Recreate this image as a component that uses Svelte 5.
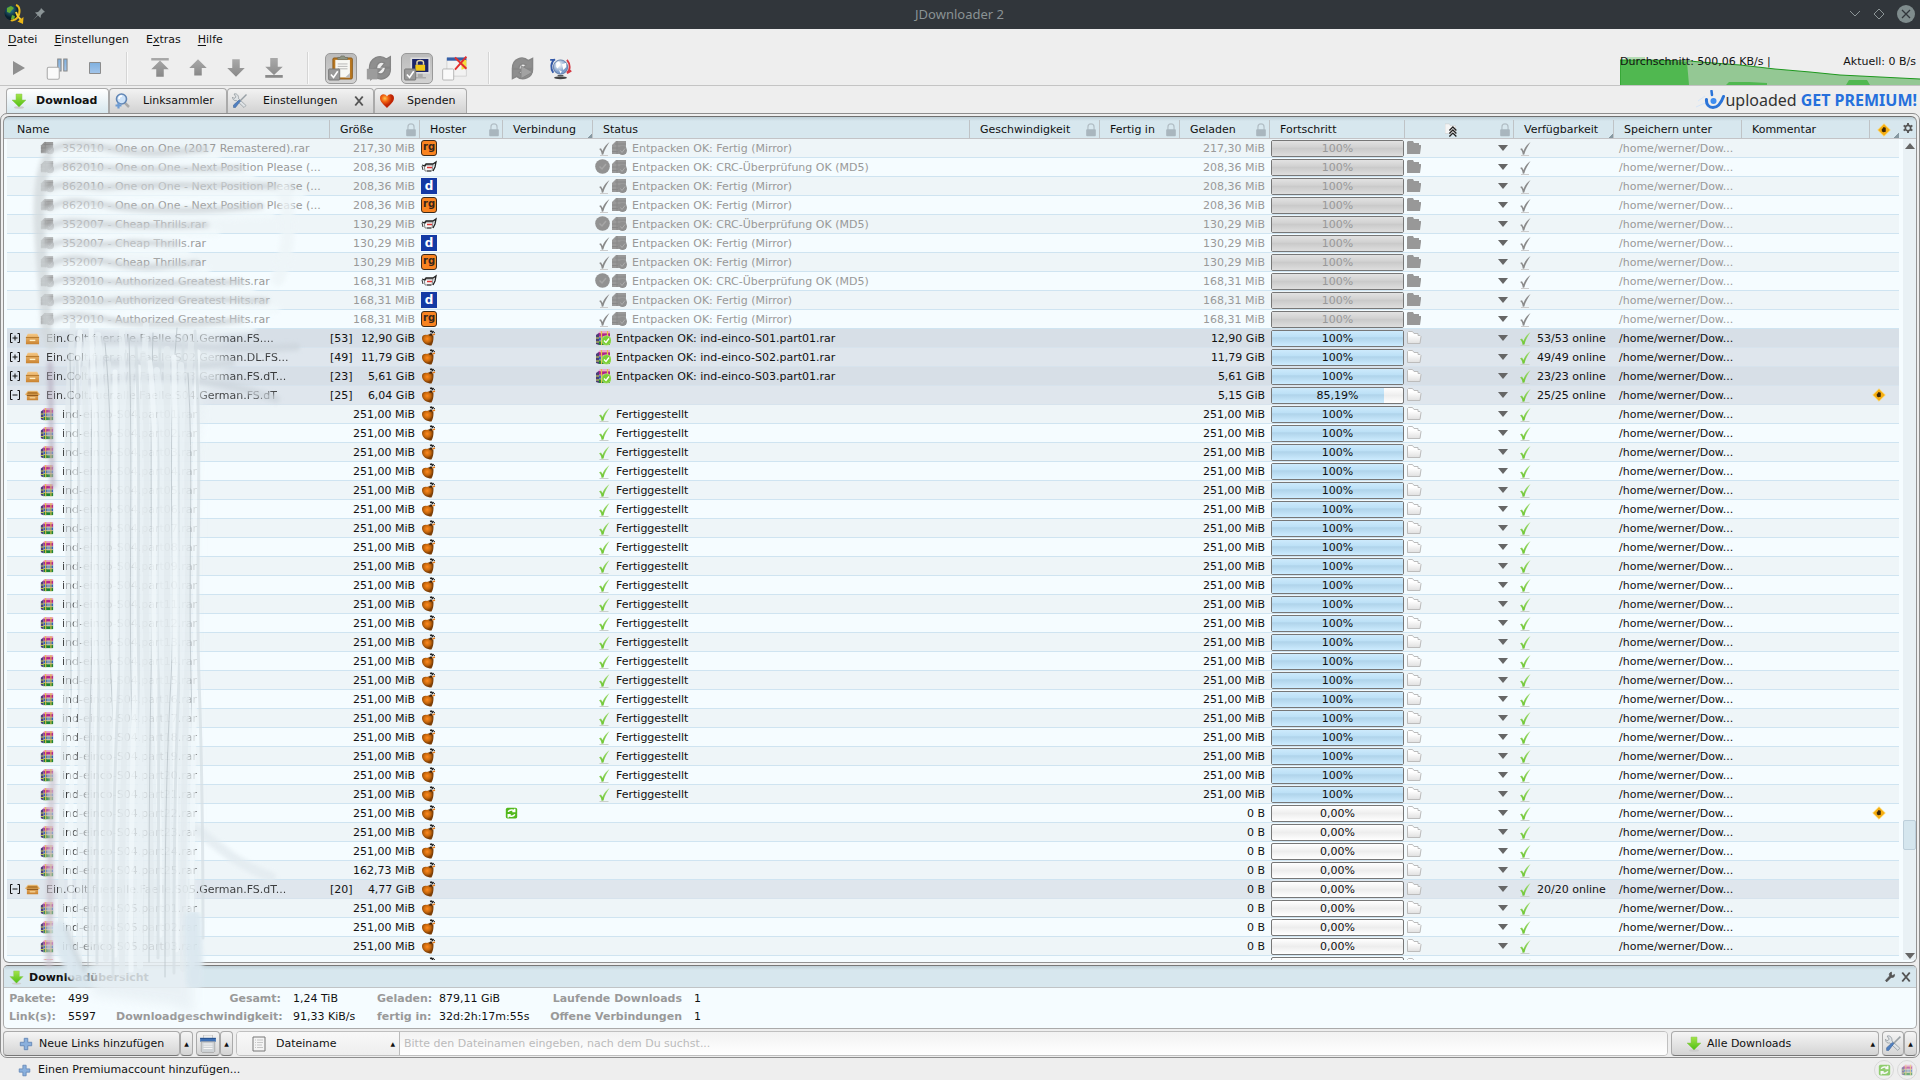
<script>
  const mirror = 'Entpacken OK: Fertig (Mirror)';
  const crc = 'Entpacken OK: CRC-Überprüfung OK (MD5)';
  const path = '/home/werner/Dow...';

  const old = [
    ['352010 - One on One (2017 Remastered).rar', '217,30', 'rg'],
    ['862010 - One on One - Next Position Please (...', '208,36', 'bull'],
    ['862010 - One on One - Next Position Please (...', '208,36', 'd'],
    ['862010 - One on One - Next Position Please (...', '208,36', 'rg'],
    ['352007 - Cheap Thrills.rar', '130,29', 'bull'],
    ['352007 - Cheap Thrills.rar', '130,29', 'd'],
    ['352007 - Cheap Thrills.rar', '130,29', 'rg'],
    ['332010 - Authorized Greatest Hits.rar', '168,31', 'bull'],
    ['332010 - Authorized Greatest Hits.rar', '168,31', 'd'],
    ['332010 - Authorized Greatest Hits.rar', '168,31', 'rg']
  ].map(([name, size, host]) => ({
    name,
    size: size + ' MiB',
    loaded: size + ' MiB',
    host,
    off: true,
    pct: 100,
    label: '100%',
    status: host === 'bull' ? crc : mirror,
    icons: [host === 'bull' ? 'crc' : 'check-off', 'extract-off']
  }));

  function pack(name, count, size, loaded, pct, label, extra = {}) {
    return { pack: true, name, count, size, loaded, pct, label, host: 'ul', icons: [], ...extra };
  }

  function link(name, size, done, extra = {}) {
    return {
      name,
      size,
      loaded: done ? size : '0 B',
      pct: done ? 100 : 0,
      label: done ? '100%' : '0,00%',
      status: done ? 'Fertiggestellt' : '',
      icons: done ? ['check'] : [],
      host: 'ul',
      ...extra
    };
  }

  const num = (n) => String(n).padStart(2, '0');
  const s04 = Array.from({ length: 25 }, (_, i) =>
    link(`ind-einco-S04.part${num(i + 1)}.rar`, i === 24 ? '162,73 MiB' : '251,00 MiB', i < 21,
      i === 21 ? { busy: true, warn: true } : {})
  );
  const s05 = Array.from({ length: 4 }, (_, i) => link(`ind-einco-S05.part${num(i + 1)}.rar`, '251,00 MiB', false));

  const rows = [
    ...old,
    pack('Ein.Colt.fuer.alle.Faelle.S01.German.FS....', 53, '12,90 GiB', '12,90 GiB', 100, '100%', { icons: ['extract'], status: 'Entpacken OK: ind-einco-S01.part01.rar' }),
    pack('Ein.Colt.fuer.alle.Faelle.S02.German.DL.FS...', 49, '11,79 GiB', '11,79 GiB', 100, '100%', { icons: ['extract'], status: 'Entpacken OK: ind-einco-S02.part01.rar' }),
    pack('Ein.Colt.fuer.alle.Faelle.S03.German.FS.dT...', 23, '5,61 GiB', '5,61 GiB', 100, '100%', { icons: ['extract'], status: 'Entpacken OK: ind-einco-S03.part01.rar' }),
    pack('Ein.Colt.fuer.alle.Faelle.S04.German.FS.dT', 25, '6,04 GiB', '5,15 GiB', 85.19, '85,19%', { open: true, warn: true }),
    ...s04,
    pack('Ein.Colt.fuer.alle.Faelle.S05.German.FS.dT...', 20, '4,77 GiB', '0 B', 0, '0,00%', { open: true }),
    ...s05
  ];

  const columns = [
    { key: 'name', label: 'Name' },
    { key: 'size', label: 'Größe', lock: true },
    { key: 'host', label: 'Hoster', lock: true },
    { key: 'conn', label: 'Verbindung', sort: true },
    { key: 'status', label: 'Status' },
    { key: 'speed', label: 'Geschwindigkeit', lock: true },
    { key: 'eta', label: 'Fertig in', lock: true },
    { key: 'loaded', label: 'Geladen', lock: true },
    { key: 'progress', label: 'Fortschritt' },
    { key: 'prio', icon: 'prio', lock: true },
    { key: 'avail', label: 'Verfügbarkeit', sort: true },
    { key: 'path', label: 'Speichern unter' },
    { key: 'comment', label: 'Kommentar' },
    { key: 'warn', icon: 'warn', sort: true }
  ];

  // wavy strands lying over the file names, one grey and one pale per row
  const ends = [215, 250, 300, 270, 215, 185, 205, 250, 275, 250];
  const across = ends.flatMap((end, i) => {
    const y = 9 + i * 19;
    const k = (i % 3) * 4 - 4;
    return [
      { d: `M46 ${y + 9} C90 ${y + 4 + k} 150 ${y + 13 - k} ${end} ${y + 9}`, c: '#f2f9fc', w: 9 },
      { d: `M48 ${y + 3} C66 ${y - 7} 84 ${y + k} 110 ${y + 1} S${end - 60} ${y + 3 - k} ${end - 10} ${y + 1}`, c: '#ccd2d6', w: 6 }
    ];
  });
  const down = Array.from({ length: 34 }, (_, i) => {
    const x = 66 + i * 4;
    const bend = ((i * 7) % 13) - 6;
    const top = 185 + ((i * 29) % 50);
    const end = 790 + ((i * 23) % 50);
    return {
      d: `M${x - bend} ${top} C${x + bend} 330 ${x - bend} 430 ${x} 540 S${x + bend} 740 ${x + bend} ${end}`,
      c: ['#e3ebef', '#b4bec4', '#f2f9fc', '#d6dfe4', '#eaf2f6'][i % 5],
      w: [6, 1, 5, 3, 6][i % 5]
    };
  });
</script>

{#snippet icon(name, w = 16, h = w)}
  <svg class="icon" width={w} height={h} viewBox="0 0 16 16" aria-hidden="true"><use href={'#' + name} /></svg>
{/snippet}

<svg class="sprite" aria-hidden="true">
  <defs>
    <linearGradient id="g-green" x2="0" y2="1"><stop stop-color="#a4e34a" /><stop offset="1" stop-color="#4fbf14" /></linearGradient>
    <linearGradient id="g-check" x2="0" y2="1"><stop stop-color="#a5dd7d" /><stop offset="1" stop-color="#6cc52e" /></linearGradient>
    <linearGradient id="g-grey" x2="0" y2="1"><stop stop-color="#a9a9a9" /><stop offset="1" stop-color="#888" /></linearGradient>
    <linearGradient id="g-blue" x2="0" y2="1"><stop stop-color="#7fb0df" /><stop offset="1" stop-color="#a3c5ea" /></linearGradient>
    <linearGradient id="g-box" x2="0" y2="1"><stop stop-color="#f5c885" /><stop offset="1" stop-color="#c9822f" /></linearGradient>
    <linearGradient id="g-folder" x2="0" y2="1"><stop offset=".3" stop-color="#fff" /><stop offset="1" stop-color="#e0e0e0" /></linearGradient>
    <radialGradient id="g-heart" cx=".35" cy=".3"><stop stop-color="#ffc34d" /><stop offset=".5" stop-color="#f0600f" /><stop offset="1" stop-color="#c02505" /></radialGradient>
    <radialGradient id="g-nut" cx=".45" cy=".4"><stop stop-color="#ff8a1e" /><stop offset=".6" stop-color="#c8680c" /><stop offset="1" stop-color="#7c3e06" /></radialGradient>
    <radialGradient id="g-globe" cx=".4" cy=".35"><stop stop-color="#fff" /><stop offset="1" stop-color="#7b9bc8" /></radialGradient>
    <radialGradient id="g-earth" cx=".4" cy=".3"><stop stop-color="#2c7f96" /><stop offset="1" stop-color="#0a1f2c" /></radialGradient>
  </defs>
  <symbol id="check" viewBox="0 0 16 16"><path d="M4 9.500l2-1 1.500 2.500C9 7 11 4.500 14.500 2 12 6 9.500 9.500 8.500 14.500l-2 .2C6.500 12.500 5.500 10.500 4 9.500z" fill="url(#g-check)" /><path d="M4.500 15.500h9" stroke="#c9cfca" /></symbol>
  <symbol id="check-off" viewBox="0 0 16 16"><path d="M4 9l2-.8 1.500 2.800C9 7 11 4.500 14.500 2 12 6 9.500 9.500 8.300 14.500l-1.500.2C6.500 12 5.500 9.500 4 9z" fill="#8b8b8b" /><path d="M5 15.500h8" stroke="#ccc" /></symbol>
  <symbol id="crc" viewBox="0 0 16 16"><circle cx="7.500" cy="7.500" r="7.300" fill="#929292" /><path d="M4.500 7.500l2.500 2.500 4-5" fill="none" stroke="#a6a6a6" stroke-width="1.500" /></symbol>
  <symbol id="rar" viewBox="0 0 16 16">
    <path d="M1 5l4-4h10v3H4L1 8z" fill="#e9a2d6" /><path d="M4 3h11v4H4z" fill="#b0218f" /><path d="M4 7h11v4H4z" fill="#2d62bd" /><path d="M4 11h11v4H4z" fill="#1d8335" />
    <path d="M1 5l3-2v12l-3-1z" fill="#4a3f78" /><path d="M1 8h3M1 12h3" stroke="#d6e24a" /><path d="M5 3h10M4 7h11M4 11h11" stroke="#f0c9a0" stroke-width=".7" /><path d="M6.500 1v14M12.500 1v14" stroke="#e6c247" stroke-width="1.200" />
    <path d="M8 6h3.500v6H8z" fill="#d9d2b8" opacity=".5" />
  </symbol>
  <symbol id="extract" viewBox="0 0 16 16"><use href="#rar" /><circle cx="11.500" cy="10.500" r="4.800" fill="#7ccf35" stroke="#c9efa0" stroke-width=".6" /><path d="M9 10.500l2 2 3-4" fill="none" stroke="#fff" stroke-width="1.300" /></symbol>
  <symbol id="extract-off" viewBox="0 0 16 16"><path d="M1 5l4-4h10v13H1z" fill="#999" /><path d="M4 4h11M1 8h9M1 11.500h6M6 1v13" stroke="#888" /><circle cx="11.500" cy="10.500" r="4.500" fill="#909090" /><path d="M9.500 10.500l1.500 2 3-4" fill="none" stroke="#adadad" /></symbol>
  <symbol id="folder" viewBox="0 0 16 16"><path d="M1.500 13.500v-11l1-1h4l1.500 2h4v2h2l1 1-1 7z" fill="url(#g-folder)" stroke="#bcbcbc" /></symbol>
  <symbol id="folder-off" viewBox="0 0 16 16"><path d="M1 14V2l1-1h5l1 2h5v2h2v2l-1 7z" fill="#989898" /></symbol>
  <symbol id="box" viewBox="0 0 16 16"><path d="M3 3h10l2 4v7H1V7z" fill="url(#g-box)" /><path d="M1 7h14" stroke="#b27428" /><path d="M5 10h6" stroke="#fff0c4" stroke-width="1.500" /></symbol>
  <symbol id="box-open" viewBox="0 0 16 16"><path d="M3 3h10l3 4-2 1v5H2V8L0 7z" fill="url(#g-box)" /><path d="M3 4h10l1 3H2z" fill="#b87c2f" /><path d="M2 8h12" stroke="#8f571c" /><path d="M5 10.500h6" stroke="#ffe9b5" /></symbol>
  <symbol id="plus-fold" viewBox="0 0 10 10"><path d="M2.500.5h-2v9h2M7.500.5h2v9h-2M2.500 5h5M5 2.500v5" fill="none" stroke="#111" /></symbol>
  <symbol id="minus-fold" viewBox="0 0 10 10"><path d="M2.500.5h-2v9h2M7.500.5h2v9h-2M2.500 5h5" fill="none" stroke="#111" /></symbol>
  <symbol id="bull" viewBox="0 0 16 16"><path d="M3 6h9l-1 6H4z" fill="#f7f7f7" stroke="#555" stroke-width=".7" /><path d="M1 6l3 1 1-2h7l3-2-1 5-2 4" fill="none" stroke="#222" stroke-width="1.300" /><path d="M1 7l1 4M6 12h4" stroke="#333" /><path d="M6 8.500h5" stroke="#d33" stroke-width="1.500" /></symbol>
  <symbol id="ul" viewBox="0 0 16 16"><path d="M1 8c0-3 3-3.500 5-3 2-1.500 6-.5 6.500 1.500 0 4-.5 6-2 9C6 15.500 1 13 1 8z" fill="url(#g-nut)" /><path d="M8 5.500l1-2 2 0 .5 2z" fill="#3a2512" /><path d="M9 1.500l2-.5M11 3l1.500-2" stroke="#1d1d1d" stroke-width="1.600" /><path d="M11.500 5l2.500-1" stroke="#e57b1b" stroke-width="1.500" /><path d="M13 2.500h1" stroke="#444" /></symbol>
  <symbol id="busy" viewBox="0 0 16 16"><rect x="1" y="1" width="14" height="13" rx="2" fill="#52b81c" /><path d="M4 6c1-3 6-3 8-1M12 2v3.500H9M12 9c-1 3-6 3-8 1M4 13V9.500h3" fill="none" stroke="#fff" stroke-width="1.800" /></symbol>
  <symbol id="warn" viewBox="0 0 16 16"><path d="M8 .8l7.200 7.200L8 15.200.8 8z" fill="#f6ae12" stroke="#ffdf75" stroke-width=".8" /><path d="M5.500 7.500l2-3 2.500 1v4.500l-3 .5-1.500-1z" fill="#3d2706" /></symbol>
  <symbol id="prio" viewBox="0 0 16 16"><path d="M0 1h5l1 2h6v9H0z" fill="#f5f5f5" stroke="#ccc" stroke-width=".6" /><path d="M5 8.500l4-4 4 4M5 12l4-4 4 4M5 15.500l4-4 4 4" fill="none" stroke="#222" stroke-width="1.500" /></symbol>
  <symbol id="lock" viewBox="0 0 16 16"><path d="M4.500 8V4.500a3.500 3.500 0 0 1 7 0V8" fill="none" stroke="#b3bfc6" stroke-width="1.400" /><rect x="2.500" y="7" width="11" height="8" rx="1" fill="#a9b6be" /></symbol>
  <symbol id="gear" viewBox="0 0 16 16"><path d="M8 0v16M1 4l14 8M15 4L1 12" stroke="#555" stroke-width="3" /><circle cx="8" cy="8" r="4.300" fill="#d7e7ee" stroke="#555" stroke-width="2.600" /></symbol>
  <symbol id="down" viewBox="0 0 16 16"><ellipse cx="8" cy="14.500" rx="5" ry="1.200" fill="#ccc" /><path d="M5 1h6v6h4l-7 7-7-7h4z" fill="url(#g-green)" stroke="#8cc95c" stroke-width=".5" /></symbol>
  <symbol id="plus" viewBox="0 0 16 16"><path d="M6 1.500h4V6h4.500v4H10v4.500H6V10H1.500V6H6z" fill="#8ab0dd" stroke="#6185b5" /></symbol>
  <symbol id="tools" viewBox="0 0 16 16"><path d="M2 1l2 3-2 1.500L.5 4c0 3 2 4 4 3.500l7.500 7 2-2-7.500-7C7 3 5 0 2 1z" fill="#dfe3e6" stroke="#8b9398" stroke-width=".7" /><path d="M14.500 1.500L8 8" stroke="#98a0a5" stroke-width="1.500" /><path d="M8.500 8L3.500 14.500l-2 0v-2.500L7 7z" fill="#4f7fc0" stroke="#365c91" stroke-width=".5" /></symbol>
  <symbol id="search" viewBox="0 0 16 16"><path d="M10 9l5 5" stroke="#aaa" stroke-width="2.500" /><circle cx="7.500" cy="6" r="5" fill="#cfe3f8" stroke="#6186b5" stroke-width="1.600" /><path d="M5 6c0-2 1-3 3-3" stroke="#fff" fill="none" stroke-width="1.500" /><path d="M4.500 9.500v6M1.500 12.500h6" stroke="#6d9bd2" stroke-width="2.200" /></symbol>
  <symbol id="heart" viewBox="0 0 16 16"><path d="M8 15C4 11 1 8.500 1 5c0-4 5-5 7-1.500C10 0 15 1 15 5c0 3.500-3 6-7 10z" fill="url(#g-heart)" /></symbol>
  <symbol id="cross" viewBox="0 0 16 16"><path d="M3 2l10 12M13 2L3 14" stroke="#555" stroke-width="2.600" /></symbol>
  <symbol id="wrench" viewBox="0 0 16 16"><path d="M10 1.500c-3 .5-3.500 3-2.500 5L2 12.500l1.500 2L9.500 8.500c3 .7 5-1 4.500-4l-2.500 1.500-1.500-1.500z" fill="#555" stroke="#555" /></symbol>
  <symbol id="page" viewBox="0 0 16 16"><path d="M2 1h12v14H2z" fill="#f4f4f4" stroke="#777" /><path d="M6 4h6M6 6.500h6M6 9h5M6 11.500h6M4 4h1M4 6.500h1M4 9h1M4 11.500h1" stroke="#bbb" stroke-width=".8" /></symbol>
  <symbol id="container" viewBox="0 0 16 16"><path d="M4 0h8v4H4z" fill="#eee" stroke="#aaa" stroke-width=".5" /><path d="M1 3h14v3H1z" fill="#3e70b5" /><path d="M1 3h14" stroke="#24508f" /><path d="M2 6h12v8.500l-1 1H3l-1-1z" fill="#cfd3d6" stroke="#999" stroke-width=".6" /><path d="M4 8h8M4 10h8M4 12h8" stroke="#f6f6f6" /></symbol>
  <symbol id="play" viewBox="0 0 16 16"><path d="M2 1l12 7L2 15z" fill="#8f8f8f" /></symbol>
  <symbol id="pause" viewBox="0 0 16 16"><path d="M8.500 2h2.200v8H8.500zM12.500 2h2.200v8h-2.200z" fill="url(#g-blue)" stroke="#888" stroke-width=".7" /><rect x="1.500" y="7.500" width="8" height="8" rx="1" fill="#fafafa" stroke="#aaa" stroke-width=".7" /></symbol>
  <symbol id="stop" viewBox="0 0 16 16"><path d="M2.500 2.500h11v11h-11z" fill="url(#g-blue)" stroke="#8c8c8c" /></symbol>
  <symbol id="top" viewBox="0 0 16 16"><path d="M1 0h14v2H1zM8 2l7 7h-4v6H5V9H1z" fill="url(#g-grey)" /></symbol>
  <symbol id="up" viewBox="0 0 16 16"><path d="M8 1l7 7h-4v6H5V8H1z" fill="url(#g-grey)" /></symbol>
  <symbol id="lower" viewBox="0 0 16 16"><path d="M8 15l7-7h-4V1H5v7H1z" fill="url(#g-grey)" /></symbol>
  <symbol id="bottom" viewBox="0 0 16 16"><path d="M1 13.500h14v2.200H1zM8 13.500L1 7h4V0h6v7h4z" fill="url(#g-grey)" /></symbol>
  <symbol id="tick" viewBox="0 0 16 16"><rect x=".4" y="8.600" width="6.800" height="6.800" rx=".5" fill="#999" stroke="#777" stroke-width=".6" /><path d="M1.800 12l1.600 1.800L6 10" fill="none" stroke="#fff" stroke-width="1" /></symbol>
  <symbol id="clipboard" viewBox="0 0 16 16"><rect x="3" y="1.800" width="12" height="13" rx=".8" fill="#b97822" stroke="#835111" stroke-width=".5" /><path d="M4.500 3h9v10.800h-9z" fill="#f8f8f4" /><path d="M6 2.800V1.500h1.500L8 .6h2l.5.9H12v1.300z" fill="#8d9483" stroke="#6b7063" stroke-width=".4" /><path d="M6 5.500h6M6 7h6M6 8.500h6" stroke="#aaa" stroke-width=".5" /><path d="M13.500 11v2.800h-3z" fill="#bbb" /><use href="#tick" /></symbol>
  <symbol id="reconnect" viewBox="0 0 16 16"><path d="M2 9C2 1 9-.5 12.500 2.500L15 1v6.500H9.500L11.500 5C9 3.500 6.500 5 6.500 8zM15 8c.5 6.500-6 8.500-10 5L3 15V8.500h6.500l-2.500 2.500c2 1.500 4.500.5 5-3z" fill="#8f8f8f" stroke="#858585" stroke-width=".8" /><path d="M.5 8.500H7V15H.5z" fill="#9c9c9c" /></symbol>
  <symbol id="screen" viewBox="0 0 16 16"><path d="M4.500 2h11v9h-11z" fill="#1c2568" stroke="#ddd" stroke-width="1" /><path d="M8.500 11.500h3v2h2v1h-7v-1h2z" fill="#aaa" /><path d="M7 6h6v3.700H7z" fill="#f0c716" /><path d="M8 6V4.500c0-1.500 4-1.500 4 0V6" fill="none" stroke="#e9d9a9" stroke-width=".9" /><use href="#tick" /></symbol>
  <symbol id="silent" viewBox="0 0 16 16"><path d="M3 2h12v11H3z" fill="#f2f2f2" stroke="#ccc" stroke-width=".5" /><path d="M3 1.500h12v2H3z" fill="#3660a8" /><path d="M12 3h3v5l-3 1z" fill="#f4df3e" /><path d="M8 1.500l7 7M15 1L8 9" stroke="#e22f2f" stroke-width="1.200" /><rect x=".4" y="8.600" width="6.800" height="6.800" rx=".6" fill="#fafafa" stroke="#aaa" stroke-width=".5" /></symbol>
  <symbol id="update" viewBox="0 0 16 16"><path d="M1 8C1 1 8-1 12 2.500L15 1v7H8l2.500-2.500C8 4 5.500 5 5.500 8zM15 8.500c0 6-7 8.500-11 5L1 15V8.500h7L5.500 11c2 2 5 .5 5.500-2.500z" fill="#8e8e8e" stroke="#868686" /><path d="M7 6l8 4.500L7 15z" fill="#a2a2a2" stroke="#808080" stroke-width=".5" /></symbol>
  <symbol id="globe" viewBox="0 0 16 16"><ellipse cx="8" cy="14.500" rx="4.500" ry="1" fill="#444" /><path d="M6 13h4" stroke="#555" /><circle cx="8" cy="7" r="5" fill="url(#g-globe)" stroke="#4c6a99" stroke-width=".5" /><path d="M5 4l2-1 1 2-2 3-1-1zM9 5l3-1v3l-2 2zM7 9l2 1-1 1.500z" fill="#fff" /><path d="M3 11C1 8 1 4 4 1.500M.8 2h3.500" fill="none" stroke="#355aa8" stroke-width="1.300" /><path d="M12.500 2c2.500 3 2.500 7 0 9M15.500 9.500l-3 1.800" fill="none" stroke="#d43a44" stroke-width="1.300" /></symbol>
</svg>

<div class="window">
  <header class="titlebar">
    <svg width="20" height="20" viewBox="0 0 20 20" aria-hidden="true">
      <circle cx="8" cy="9" r="7.500" fill="url(#g-earth)" />
      <path d="M3 4l4-2 3 2-3 3-1 2-3-1zM8 11l3 1-1 4-3-1z" fill="#63a834" />
      <path d="M12 1c4 1 5 8 1 13-2 2-5 3-6 2" fill="none" stroke="#e9b91c" stroke-width="2" />
      <path d="M12 8c1 4 3 6 5 8" fill="none" stroke="#f5cf37" stroke-width="2" /><path d="M19.500 13l-.5 7-5.500-2.500z" fill="#eab516" />
    </svg>
    <svg width="14" height="14" viewBox="0 0 14 14" aria-hidden="true"><path d="M9 1l4 4-1.500.5L9 8l-.5 3L6 8.500 1 13l4.500-5L3 5.500 6 5l2.500-2.500z" fill="#8b9496" /></svg>
    <h1>JDownloader 2</h1>
    <div class="win-buttons">
      <button aria-label="Minimieren"><svg width="12" height="12" viewBox="0 0 12 12"><path d="M1 3l5 5 5-5" fill="none" stroke="#8b9496" /></svg></button>
      <button aria-label="Maximieren"><svg width="12" height="12" viewBox="0 0 12 12"><path d="M6 1l5 5-5 5-5-5z" fill="none" stroke="#8b9496" /></svg></button>
      <button aria-label="Schließen"><svg width="18" height="18" viewBox="0 0 18 18"><circle cx="9" cy="9" r="9" fill="#7f8c8d" /><path d="M5 5l8 8M13 5l-8 8" stroke="#31363b" stroke-width="1.300" /></svg></button>
    </div>
  </header>

  <nav class="menu">
    <button><u>D</u>atei</button>
    <button><u>E</u>instellungen</button>
    <button>E<u>x</u>tras</button>
    <button><u>H</u>ilfe</button>
  </nav>

  <div class="toolbar">
    <div class="tools">
      <button aria-label="Start">{@render icon('play')}</button>
      <button aria-label="Pause">{@render icon('pause', 24)}</button>
      <button aria-label="Stopp">{@render icon('stop')}</button>
    </div>
    <div class="tools">
      <button aria-label="Ganz nach oben">{@render icon('top', 20)}</button>
      <button aria-label="Nach oben">{@render icon('up', 20)}</button>
      <button aria-label="Nach unten">{@render icon('lower', 20)}</button>
      <button aria-label="Ganz nach unten">{@render icon('bottom', 20)}</button>
    </div>
    <div class="tools">
      <button class="on" aria-label="Zwischenablage">{@render icon('clipboard', 26)}</button>
      <button aria-label="Auto-Reconnect">{@render icon('reconnect', 26)}</button>
      <button class="on" aria-label="Premium">{@render icon('screen', 26)}</button>
      <button aria-label="Silent-Modus">{@render icon('silent', 26)}</button>
    </div>
    <div class="tools">
      <button aria-label="Reconnect">{@render icon('update', 23)}</button>
      <button aria-label="Update">{@render icon('globe', 23)}</button>
    </div>
    <div class="speed">
      <svg width="300" height="28" viewBox="0 0 300 28" aria-hidden="true">
        <path d="M0 3h30l50 2 40 3 35 4 35 3 30 3 80 4v6H0z" fill="#94c894" />
        <path d="M0 3h27l40 2 2 23H0zM106 28l3-3h20l18 1v2zM226 28l3-5h18l3 5z" fill="#50b850" />
        <path d="M0 28V3h27l43 1 10 1 40 3 35 4 35 3 30 3 80 4" fill="none" stroke="#1e981e" />
        <path d="M7 1h18" stroke="#7dcc7d" />
      </svg>
      <span>Durchschnitt: 500,06 KB/s |</span>
      <span>Aktuell: 0 B/s</span>
    </div>
  </div>

  <div class="tabrow">
    <div class="tabs">
      <button class="tab active">{@render icon('down')}<span>Download</span></button>
      <button class="tab linkgrabber">{@render icon('search')}<span>Linksammler</span></button>
      <button class="tab settings">{@render icon('tools')}<span>Einstellungen</span>{@render icon('cross', 12)}</button>
      <button class="tab donate">{@render icon('heart')}<span>Spenden</span></button>
    </div>
    <a class="banner" href="#premium">
      <svg width="30" height="20" viewBox="0 0 30 20" aria-hidden="true">
        <path d="M3 11l7-5M1 17l9-4" stroke="#d5e5f8" />
        <path d="M11.500 9.500c-.5 5 2.500 8 6.500 8s8-4 10.500-11" fill="none" stroke="#2b74d8" stroke-width="3" stroke-linecap="round" />
        <circle cx="18.500" cy="11" r="3" fill="#3e8df0" /><path d="M16.500 1l.5 4" stroke="#2b74d8" stroke-width="2.500" stroke-linecap="round" />
      </svg>
      <span class="brand">uploaded</span> <b>GET PREMIUM!</b>
    </a>
  </div>

  <main>
    <section class="panel">
      <div class="table-wrap">
        <table>
          <colgroup>
            {#each columns as c}<col class={'c-' + c.key} />{/each}
          </colgroup>
          <thead>
            <tr>
              {#each columns as c}
                <th class={'h-' + c.key} class:sort={c.sort} aria-label={c.label ?? c.key}>
                  <div class="head">
                    {#if c.label}<span>{c.label}</span>{:else}<span class="mid">{@render icon(c.icon, 14)}</span>{/if}
                    {#if c.lock}{@render icon('lock', 14)}{/if}
                  </div>
                </th>
              {/each}
            </tr>
          </thead>
          <tbody>
            {#each rows as r}
              <tr class:pack={r.pack} class:off={r.off}>
                <td>
                  <div class="cell" class:name-link={!r.pack}>
                    {#if r.pack}<button class="fold" aria-label={r.open ? 'Zuklappen' : 'Aufklappen'}>{@render icon(r.open ? 'minus-fold' : 'plus-fold', 10)}</button>{@render icon(r.open ? 'box-open' : 'box', 15)}{:else}{@render icon(r.off ? 'extract-off' : 'rar', 14)}{/if}
                    <span class="name">{r.name}</span>
                  </div>
                </td>
                <td class="num">{#if r.count}<span class="count">[{r.count}]</span>{/if}{r.size}</td>
                <td><div class="cell host">{#if r.host === 'rg' || r.host === 'd'}<b class={'badge ' + r.host}>{r.host}</b>{:else}{@render icon(r.host)}{/if}</div></td>
                <td><div class="cell">{#if r.busy}{@render icon('busy', 13)}{/if}</div></td>
                <td><div class="cell status">{#each r.icons as i}{@render icon(i)}{/each}<span>{r.status ?? ''}</span></div></td>
                <td></td>
                <td></td>
                <td class="num">{r.loaded}</td>
                <td><div class="bar"><div class="fill" style="width: {r.pct}%"></div><span>{r.label}</span></div></td>
                <td><div class="cell prio">{@render icon(r.off ? 'folder-off' : 'folder')}<i class="tri"></i></div></td>
                <td><div class="cell avail">{@render icon(r.off ? 'check-off' : 'check')}{#if r.pack}<span>{r.count}/{r.count} online</span>{/if}</div></td>
                <td class="path">{path}</td>
                <td></td>
                <td><div class="cell">{#if r.warn}{@render icon('warn', 14)}{/if}</div></td>
              </tr>
            {/each}
          </tbody>
        </table>
      </div>
      <div class="side">
        <button class="config" aria-label="Spalten">{@render icon('gear', 10)}</button>
        <div class="track"><i class="tri flip"></i><div class="thumb"></div><i class="tri"></i></div>
      </div>
    </section>

    <section class="overview">
      <header>
        {@render icon('down', 15)}
        <h2>Downloadübersicht</h2>
        <button aria-label="Konfigurieren">{@render icon('wrench', 12)}</button>
        <button aria-label="Schließen">{@render icon('cross', 12)}</button>
      </header>
      <dl>
        <dt>Pakete:</dt><dd>499</dd><dt>Gesamt:</dt><dd>1,24 TiB</dd><dt>Geladen:</dt><dd>879,11 GiB</dd><dt>Laufende Downloads</dt><dd>1</dd>
        <dt>Link(s):</dt><dd>5597</dd><dt>Downloadgeschwindigkeit:</dt><dd>91,33 KiB/s</dd><dt>fertig in:</dt><dd>32d:2h:17m:55s</dd><dt>Offene Verbindungen</dt><dd>1</dd>
      </dl>
    </section>

    <div class="actions">
      <div class="split">
        <button class="add">{@render icon('plus', 14)}<span>Neue Links hinzufügen</span></button>
        <button class="more" aria-label="Mehr">▲</button>
      </div>
      <div class="split">
        <button class="box-btn" aria-label="Container laden">{@render icon('container', 18)}</button>
        <button class="more" aria-label="Container-Menü">▲</button>
      </div>
      <div class="filter">
        <button class="kind">{@render icon('page', 16)}<span>Dateiname</span><i>▲</i></button>
        <input aria-label="Dateiname" placeholder="Bitte den Dateinamen eingeben, nach dem Du suchst..." />
      </div>
      <button class="view">{@render icon('down', 16)}<span>Alle Downloads</span><i>▲</i></button>
      <div class="split">
        <button class="cfg" aria-label="Einstellungen">{@render icon('tools', 17)}</button>
        <button class="more" aria-label="Einstellungsmenü">▲</button>
      </div>
    </div>

    <svg class="smear" width="360" height="880" viewBox="0 0 360 880" aria-hidden="true">
      <defs>
        <filter id="soft" x="-20%" width="140%"><feGaussianBlur stdDeviation="2" /></filter>
        <filter id="softer" x="-20%" width="140%"><feGaussianBlur stdDeviation="6" /></filter>
        <filter id="fine"><feGaussianBlur stdDeviation="0.600" /></filter>
      </defs>
      <path d="M78 196h140l6 40-24 20-6 60-2 560-20-10-80-10-10-60z" fill="#e8f0f4" opacity=".85" filter="url(#softer)" />
      <g fill="none" stroke-linecap="round" opacity=".78" filter="url(#soft)">
        {#each across as s}<path d={s.d} stroke={s.c} stroke-width={s.w} />{/each}
        <path d="M46 20C34 50 38 90 43 150S42 180 50 205" stroke="#d3d9dc" stroke-width="11" />
        <path d="M283 50c6 30 6 60-6 90" stroke="#eef5f8" stroke-width="14" />
        <path d="M76 204C130 196 190 214 295 208M80 226c40-8 80 6 150-2M90 243c60-10 120-5 185 17" stroke="#ced6dd" stroke-width="8" />
        <path d="M49 225c2 60 0 70 3 122" stroke="#b7aec0" stroke-width="5" />
        <path d="M52 635c-4 50-2 110-4 190" stroke="#cdc6d0" stroke-width="7" />
        <path d="M195 690c20 14 40 36 75 48" stroke="#e2eaef" stroke-width="10" />
      </g>
      <g fill="none" stroke-linecap="round" opacity=".7" filter="url(#fine)">
        {#each down as s}<path d={s.d} stroke={s.c} stroke-width={s.w} />{/each}
      </g>
      <g fill="none" stroke-linecap="round" opacity=".9" filter="url(#soft)">
        <path d="M58 790c6 24 14 40 22 50M192 780c0 30 2 44 2 62" stroke="#dae7ef" stroke-width="17" />
        <path d="M66 790c6 20 12 34 18 42" stroke="#c9d3d9" stroke-width="4" />
      </g>
    </svg>
  </main>

  <footer>
    <button>{@render icon('plus', 13)}<span>Einen Premiumaccount hinzufügen...</span></button>
    <div class="tray"><span>{@render icon('busy', 13)}</span><span>{@render icon('rar', 12)}</span></div>
  </footer>
</div>

<style>
  :global(body) {
    background: #eee;
  }

  .window {
    display: flex;
    flex-direction: column;
    height: 100vh;
    background: #eee;
    color: #111;
    font: 11px/14px "DejaVu Sans", Verdana, sans-serif;
    overflow: hidden;
  }

  .window * {
    box-sizing: border-box;
  }

  button {
    padding: 0;
    border: 0;
    background: none;
    font: inherit;
    color: inherit;
  }

  .sprite {
    position: absolute;
    width: 0;
    height: 0;
  }

  .icon {
    display: block;
    flex: none;
  }

  .titlebar {
    display: flex;
    align-items: center;
    gap: 8px;
    height: 29px;
    flex: none;
    padding: 0 5px 1px 4px;
    background: #31363b;
  }

  .titlebar h1 {
    flex: 1;
    margin: 0 0 0 24px;
    text-align: center;
    font: 13px "Noto Sans", sans-serif;
    color: #8a9294;
  }

  .win-buttons {
    display: flex;
    align-items: center;
    gap: 12px;
  }

  .win-buttons svg {
    display: block;
  }

  .menu {
    display: flex;
    gap: 17px;
    height: 22px;
    flex: none;
    padding-left: 8px;
  }

  u {
    text-underline-offset: 2px;
  }

  .toolbar {
    display: flex;
    height: 35px;
    flex: none;
    border-bottom: 1px solid #c4c4c4;
  }

  .tools {
    display: flex;
    align-items: center;
    gap: 6px;
    margin: 1px 0;
    padding-right: 17px;
  }

  .tools + .tools {
    padding-left: 17px;
    border-left: 1px solid #d5d5d5;
    box-shadow: inset 1px 0 #fafafa;
  }

  .tools:first-child {
    padding: 0 15px 0 3px;
  }

  .tools button {
    display: flex;
    align-items: center;
    justify-content: center;
    width: 32px;
    height: 31px;
    border: 1px solid transparent;
    border-radius: 5px;
  }

  .tools .on {
    background: linear-gradient(#bbb, #d2d2d2);
    border-color: #999;
  }

  .speed {
    display: flex;
    justify-content: space-between;
    position: relative;
    width: 300px;
    margin-left: auto;
    padding: 4px 4px 0 0;
  }

  .speed svg {
    position: absolute;
    left: 0;
    bottom: 0;
  }

  .speed span {
    position: relative;
  }

  .tabrow {
    display: flex;
    justify-content: space-between;
    height: 27px;
    flex: none;
  }

  .tabs {
    display: flex;
    align-items: flex-end;
    padding-left: 6px;
  }

  .tab {
    display: flex;
    align-items: center;
    height: 25px;
    padding-left: 4px;
    background: linear-gradient(#f2f2f2, #d2d2d2);
    border: 1px solid #aaa;
    border-bottom: 0;
    border-radius: 4px 4px 0 0;
  }

  .tab.active {
    width: 103px;
    gap: 9px;
    background: linear-gradient(#fff, #d7e7ee);
    font-weight: 700;
  }

  .linkgrabber {
    width: 118px;
    gap: 13px;
  }

  .settings {
    width: 147px;
    gap: 15px;
  }

  .donate {
    width: 93px;
    gap: 12px;
  }

  .banner {
    display: flex;
    align-items: center;
    padding-right: 3px;
    color: #2670dc;
    text-decoration: none;
    font: 16px "Noto Sans", sans-serif;
  }

  .banner b {
    margin-left: 4px;
    font: 700 16px "Noto Sans", sans-serif;
  }

  .brand {
    color: #333;
  }

  main {
    display: flex;
    flex-direction: column;
    gap: 2px;
    flex: 1;
    min-height: 0;
    position: relative;
    padding: 2px 2px 1px;
    border: 1px solid #8d8d8d;
    border-radius: 7px;
  }

  .panel {
    display: flex;
    flex: 1;
    min-height: 0;
    padding-bottom: 2px;
    border: 1px solid #929292;
    border-top-color: #6f6f6f;
    border-radius: 6px;
    background: linear-gradient(#bccdd5, #d7e7ee 4px, #d7e7ee 21px, #c3c3c6 21px, #c3c3c6 22px, #f5fcff 22px);
    overflow: hidden;
  }

  .table-wrap {
    flex: 1;
    min-width: 0;
    padding-left: 3px;
    overflow: hidden;
  }

  table {
    width: 100%;
    table-layout: fixed;
    border-collapse: separate;
    border-spacing: 0;
  }

  .c-name { width: 322px; }
  .c-size, .c-conn, .c-loaded { width: 90px; }
  .c-host { width: 83px; }
  .c-speed { width: 130px; }
  .c-eta { width: 80px; }
  .c-progress { width: 135px; }
  .c-prio { width: 109px; }
  .c-avail { width: 100px; }
  .c-path, .c-comment { width: 128px; }
  .c-warn { width: 30px; }

  th {
    height: 22px;
    padding: 3px 0 1px;
    font-weight: 400;
    text-align: left;
  }

  .head {
    display: flex;
    align-items: center;
    justify-content: space-between;
    height: 18px;
    padding: 1px 1px 0 10px;
    border-left: 1px solid #bfc3c6;
  }

  .h-name .head {
    border: 0;
  }

  .h-warn .head,
  .h-prio .head {
    padding-left: 0;
  }

  .mid {
    display: flex;
    flex: 1;
    justify-content: center;
  }

  .sort .head {
    background: linear-gradient(135deg, transparent 50%, #8698a1 50%) right bottom / 5px 5px no-repeat;
  }

  td {
    height: 19px;
    padding: 0;
    border-bottom: 1px solid #cfe4f1;
    background: #f5fcff;
    line-height: 16px;
    white-space: nowrap;
    overflow: hidden;
  }

  tbody tr:nth-child(odd) td {
    background: #eef5f8;
  }

  tbody tr.pack td {
    background: #dfe6ed;
    border-color: #d7e3ed;
  }

  tbody tr.pack:nth-child(odd) td {
    background: #d7dfe7;
  }

  tr.off td {
    color: #999;
  }

  .cell {
    display: flex;
    align-items: center;
    height: 18px;
    padding-left: 3px;
  }

  .cell span {
    padding-top: 2px;
  }

  .name-link {
    padding-left: 33px;
  }

  .cell.name-link .name {
    padding-left: 8px;
  }

  .fold {
    width: 15px;
    flex: none;
  }

  .cell .name {
    padding-left: 6px;
    opacity: 0.8;
  }

  .off .cell .name {
    opacity: 1;
  }

  .num {
    padding: 2px 4px 0 1px;
    text-align: right;
  }

  .count {
    float: left;
  }

  .host {
    padding-left: 2px;
  }

  .badge {
    width: 16px;
    height: 16px;
    border: 1px solid #3c2b1c;
    border-radius: 3px;
    background: #f98320;
    color: #38261a;
    font-size: 10px;
    line-height: 12px;
    text-align: center;
  }

  .badge.d {
    border: 0;
    border-radius: 0;
    background: #1439a4;
    color: #fff;
    font-size: 12px;
    line-height: 16px;
  }

  .status {
    padding-left: 3px;
  }

  .status span {
    padding-left: 5px;
  }

  .bar {
    position: relative;
    height: 17px;
    margin: 1px 0 0 2px;
    border: 1px solid #777;
    border-radius: 2px;
    background: linear-gradient(#fff, #ededed 50%, #fff);
    text-align: center;
  }

  .fill {
    position: absolute;
    inset: 0 auto 0 0;
    background: linear-gradient(#cdeafc, #bce0f6 40%, #afd3ea 45%, #cdecff);
  }

  .off .fill {
    background: linear-gradient(#e2e2e2, #d2d2d2 40%, #cacaca 50%, #dedede);
  }

  .bar span {
    position: relative;
  }

  .prio {
    justify-content: space-between;
    padding: 0 5px 0 2px;
  }

  .tri {
    border: 5px solid transparent;
    border-top: 6px solid #666;
    border-bottom: 0;
  }

  .tri.flip {
    border-top: 0;
    border-bottom: 6px solid #666;
  }

  .avail span {
    padding-left: 5px;
  }

  .path {
    padding: 2px 0 0 6px;
  }

  .side {
    display: flex;
    flex-direction: column;
    width: 17px;
  }

  .config {
    display: flex;
    align-items: center;
    justify-content: center;
    height: 22px;
    flex: none;
  }

  .track {
    display: flex;
    flex-direction: column;
    align-items: center;
    flex: 1;
    margin-left: 4px;
    padding: 4px 0 1px;
    background: #e9f1f5;
  }

  .thumb {
    align-self: stretch;
    height: 30px;
    margin: auto 0 103px;
    border: 1px solid #bdcfda;
    border-radius: 2px;
    background: #d5e6ee;
  }

  .overview {
    height: 64px;
    flex: none;
    border: 1px solid #aaa;
    border-top-color: #777;
    border-radius: 5px;
    background: #f5fcff;
    overflow: hidden;
  }

  .overview header {
    display: flex;
    align-items: center;
    gap: 4px;
    height: 22px;
    padding: 1px 4px 0 5px;
    background: linear-gradient(#c0d0d8, #d7e7ee 4px);
    border-bottom: 1px solid #c0c4c6;
  }

  .overview h2 {
    flex: 1;
    margin: 0 0 0 1px;
    padding-top: 1px;
    font-size: 11px;
    line-height: 14px;
  }

  dl {
    display: grid;
    grid-template-columns: 49px 36px 165px 72px 50px 95px 136px 40px;
    column-gap: 12px;
    row-gap: 4px;
    margin: 4px 0 0 3px;
    white-space: nowrap;
  }

  dt {
    color: #999;
    font-weight: 700;
    text-align: right;
  }

  dd {
    margin: 0;
  }

  .actions {
    display: flex;
    gap: 3px;
    height: 25px;
    flex: none;
  }

  .split {
    display: flex;
  }

  .split button,
  .view {
    display: flex;
    align-items: center;
    justify-content: center;
    border: 1px solid #aaa;
    border-bottom-color: #777;
    border-radius: 4px;
    background: linear-gradient(#f5f5f5, #d4d4d4);
  }

  .split .add {
    width: 177px;
    justify-content: flex-start;
    padding-left: 15px;
    gap: 6px;
  }

  .split .more {
    width: 13px;
    font-size: 6px;
  }

  .split .box-btn {
    width: 24px;
  }

  .split .cfg {
    width: 22px;
  }

  .filter {
    display: flex;
    flex: 1;
    border: 1px solid #c0c0c0;
    border-radius: 4px;
    overflow: hidden;
  }

  .filter input {
    flex: 1;
    padding: 0 4px;
    border: 0;
    border-left: 1px solid #bbb;
    background: linear-gradient(#f2f2f2, #fff);
    font: inherit;
  }

  .filter input::placeholder {
    color: #bbb;
  }

  .kind {
    display: flex;
    align-items: center;
    width: 162px;
    padding: 0 4px 0 14px;
    gap: 9px;
    background: linear-gradient(#f8f8f8, #eee);
  }

  .kind i,
  .view i {
    margin-left: auto;
    font: 6px "DejaVu Sans", sans-serif;
  }

  .view {
    width: 208px;
    padding: 0 3px 0 14px;
    gap: 5px;
  }

  .smear {
    position: absolute;
    top: 25px;
    left: 0;
    pointer-events: none;
  }

  footer {
    display: flex;
    align-items: center;
    justify-content: space-between;
    height: 22px;
    flex: none;
    padding: 2px 3px 0 18px;
  }

  footer button {
    display: flex;
    align-items: center;
    gap: 7px;
  }

  .tray {
    display: flex;
    gap: 3px;
  }

  .tray span {
    display: flex;
    align-items: center;
    justify-content: center;
    width: 20px;
    height: 20px;
    border: 1px solid #c9c9c9;
    border-radius: 50%;
    opacity: 0.6;
  }
</style>
